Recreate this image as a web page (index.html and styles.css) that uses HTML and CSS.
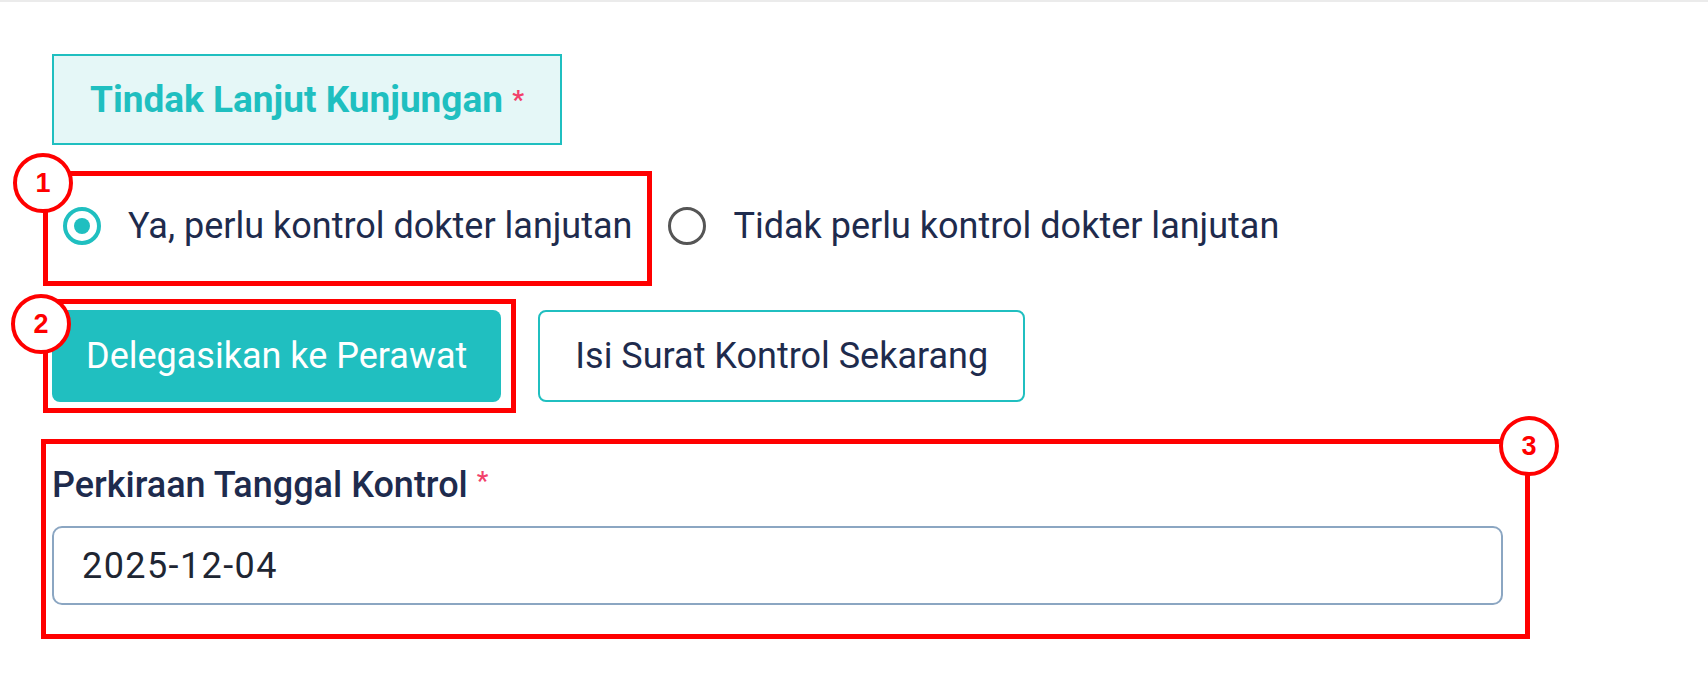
FILE: index.html
```html
<!DOCTYPE html>
<html lang="id">
<head>
<meta charset="utf-8">
<title>Tindak Lanjut Kunjungan</title>
<link rel="stylesheet" href="styles.css">
</head>
<body>
<div class="topline"></div>
<main class="page">
  <div class="section-title">Tindak Lanjut Kunjungan <span class="req">*</span></div>

  <div class="options">
    <label class="option">
      <span class="radio radio-checked"></span>
      <span class="option-text">Ya, perlu kontrol dokter lanjutan</span>
    </label>
    <label class="option">
      <span class="radio"></span>
      <span class="option-text">Tidak perlu kontrol dokter lanjutan</span>
    </label>
  </div>

  <div class="actions">
    <button class="btn btn-primary" type="button">Delegasikan ke Perawat</button>
    <button class="btn btn-outline" type="button">Isi Surat Kontrol Sekarang</button>
  </div>

  <div class="field">
    <div class="field-label">Perkiraan Tanggal Kontrol <span class="req">*</span></div>
    <div class="input">2025-12-04</div>
  </div>
</main>

<div class="annotations">
  <div class="mark mark-1"></div>
  <div class="mark mark-2"></div>
  <div class="mark mark-3"></div>
  <div class="badge badge-1">1</div>
  <div class="badge badge-2">2</div>
  <div class="badge badge-3">3</div>
</div>
</body>
</html>
```

FILE: styles.css
```css
* { box-sizing: border-box; }

html, body {
  margin: 0;
  padding: 0;
  background: #ffffff;
}

body {
  font-family: Roboto, "Noto Sans", "Liberation Sans", sans-serif;
  color: #1e2b4d;
  width: 1708px;
  height: 696px;
  overflow: hidden;
  position: relative;
}

.topline {
  height: 2px;
  background: #ebebeb;
}

.page {
  padding: 52px 0 0 52px;
}

.section-title {
  display: inline-flex;
  align-items: center;
  height: 91px;
  padding: 0 36px 0 36px;
  border: 2px solid #1fbfc0;
  background: #e5f7f7;
  color: #1fbfc0;
  font-size: 37px;
  font-weight: 700;
  white-space: pre;
}

.req {
  color: #f2416b;
  font-size: 26px;
  font-weight: 500;
  vertical-align: 7px;
}

.section-title .req { font-weight: 700; }

.options {
  display: flex;
  align-items: center;
  gap: 36px;
  margin-top: 56px;
  height: 50px;
  line-height: 50px;
  font-size: 36px;
}

.option {
  display: flex;
  align-items: center;
  gap: 27px;
}

.option:first-child { margin-left: 11px; }

.radio {
  width: 38px;
  height: 38px;
  border-radius: 50%;
  border: 3px solid #555555;
  display: flex;
  align-items: center;
  justify-content: center;
  flex: none;
}

.radio-checked {
  border: 4px solid #1fbfc0;
}

.radio-checked::after {
  content: "";
  width: 16px;
  height: 16px;
  border-radius: 50%;
  background: #1fbfc0;
}

.actions {
  display: flex;
  gap: 37px;
  margin-top: 59px;
}

.btn {
  height: 92px;
  border-radius: 8px;
  font-family: inherit;
  font-size: 36px;
  font-weight: 400;
  cursor: pointer;
}

.btn-primary {
  background: #20bfc0;
  color: #ffffff;
  border: none;
  padding: 0 34px;
}

.btn-outline {
  background: #ffffff;
  color: #1e2b4d;
  border: 2px solid #20bfc0;
  padding: 0 35px;
}

.field {
  margin-top: 54px;
  width: 1451px;
}

.field-label {
  font-size: 36px;
  font-weight: 500;
  line-height: 50px;
  white-space: pre;
}

.input {
  margin-top: 16px;
  height: 79px;
  border: 2px solid #8ba6c2;
  border-radius: 10px;
  display: flex;
  align-items: center;
  padding-left: 28px;
  font-size: 36px;
  letter-spacing: 1.4px;
  color: #1e2633;
}

/* annotation overlays */
.annotations {
  position: absolute;
  inset: 0;
  pointer-events: none;
}

.mark {
  position: absolute;
  border: 5px solid #ff0000;
}

.mark-1 { left: 43px; top: 171px; width: 609px; height: 115px; }
.mark-2 { left: 43px; top: 299px; width: 473px; height: 114px; }
.mark-3 { left: 41px; top: 439px; width: 1489px; height: 200px; }

.badge {
  position: absolute;
  width: 60px;
  height: 60px;
  margin: -30px 0 0 -30px;
  border-radius: 50%;
  border: 4px solid #ff0000;
  background: #ffffff;
  color: #ff0000;
  font-family: "Liberation Sans", Arial, sans-serif;
  font-size: 27px;
  font-weight: 700;
  display: flex;
  align-items: center;
  justify-content: center;
}

.badge-1 { left: 43px; top: 183px; }
.badge-2 { left: 41px; top: 324px; }
.badge-3 { left: 1529px; top: 446px; }
```
